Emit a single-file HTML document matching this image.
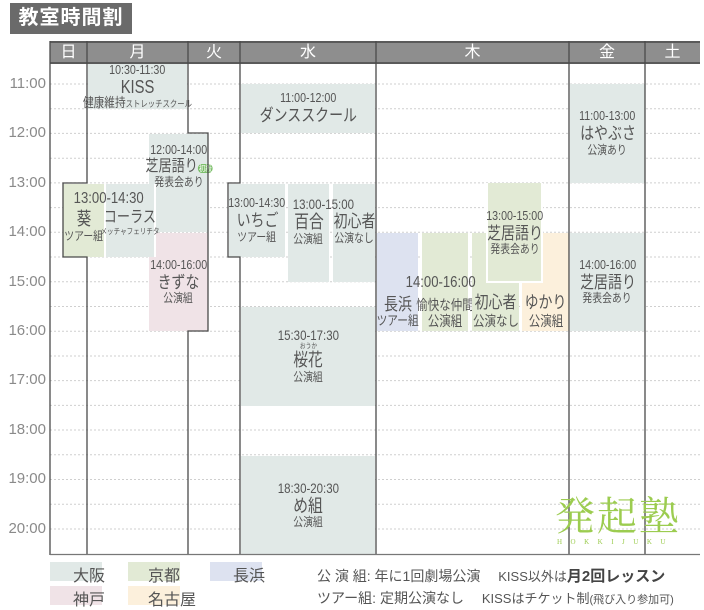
<!DOCTYPE html>
<html><head><meta charset="utf-8"><style>
*{margin:0;padding:0;box-sizing:border-box}
body{width:704px;height:610px;background:#fff;position:relative;overflow:hidden;font-family:"Liberation Sans","Noto Sans CJK JP",sans-serif;color:#555}
.a{position:absolute}
.title{left:10px;top:3px;width:122px;height:31px;background:#6a6a6a;color:#fff;font-weight:bold;font-size:20px;line-height:31px;text-align:center;letter-spacing:1px}
.hd{left:50px;top:41px;width:650px;height:23px;background:#8e8e8e;border-top:2px solid #5a5a5a;border-bottom:2px solid #5a5a5a}
.day{position:absolute;top:41px;height:23px;line-height:23px;color:#fff;font-size:16px;text-align:center}
.tl{position:absolute;left:4px;width:42px;font-size:15px;color:#8a8a8a;text-align:right;line-height:16px}
.b{position:absolute;display:flex;flex-direction:column;align-items:center;justify-content:center;text-align:center;line-height:1.15;color:#555;white-space:nowrap}
.b>span,.sq{display:inline-block;transform:scaleX(.82)}
.os{background:#e1e9e7}.ky{background:#e2ead5}.na{background:#dde2f0}.ko{background:#f0e3e7}.ng{background:#fcf0dc}
.t{font-size:13px}.n{font-size:16px}.s{font-size:12px}
.lg{position:absolute;font-size:16px;color:#555}
.sw{position:absolute;height:19px;width:52px}
</style></head><body>
<div class="a title">教室時間割</div>

<svg class="a" style="left:0;top:0" width="704" height="610">
<g stroke="#cfcfcf" stroke-width="1" stroke-dasharray="2,2">
<line x1="50" x2="700" y1="84" y2="84"/><line x1="50" x2="700" y1="108.7" y2="108.7"/>
<line x1="50" x2="700" y1="133.4" y2="133.4"/><line x1="50" x2="700" y1="158.2" y2="158.2"/>
<line x1="50" x2="700" y1="182.9" y2="182.9"/><line x1="50" x2="700" y1="207.6" y2="207.6"/>
<line x1="50" x2="700" y1="232.3" y2="232.3"/><line x1="50" x2="700" y1="257" y2="257"/>
<line x1="50" x2="700" y1="281.8" y2="281.8"/><line x1="50" x2="700" y1="306.5" y2="306.5"/>
<line x1="50" x2="700" y1="331.2" y2="331.2"/><line x1="50" x2="700" y1="356" y2="356"/>
<line x1="50" x2="700" y1="380.6" y2="380.6"/><line x1="50" x2="700" y1="405.4" y2="405.4"/>
<line x1="50" x2="700" y1="430" y2="430"/><line x1="50" x2="700" y1="454.8" y2="454.8"/>
<line x1="50" x2="700" y1="479.5" y2="479.5"/><line x1="50" x2="700" y1="504.3" y2="504.3"/>
<line x1="50" x2="700" y1="529" y2="529"/>
</g></svg>

<div class="a hd"></div>
<div class="day" style="left:50px;width:37px">日</div>
<div class="day" style="left:87px;width:101px">月</div>
<div class="day" style="left:188px;width:52px">火</div>
<div class="day" style="left:240px;width:136px">水</div>
<div class="day" style="left:376px;width:193px">木</div>
<div class="day" style="left:569px;width:76px">金</div>
<div class="day" style="left:645px;width:55px">土</div>

<div class="tl" style="top:76px">11:00</div>
<div class="tl" style="top:125px">12:00</div>
<div class="tl" style="top:175px">13:00</div>
<div class="tl" style="top:224px">14:00</div>
<div class="tl" style="top:274px">15:00</div>
<div class="tl" style="top:323px">16:00</div>
<div class="tl" style="top:372px">17:00</div>
<div class="tl" style="top:422px">18:00</div>
<div class="tl" style="top:471px">19:00</div>
<div class="tl" style="top:521px">20:00</div>

<!-- Mon / Tue -->
<div class="b os" style="left:88px;top:64px;width:99px;height:45px"><span class="t">10:30-11:30</span><span class="n" style="font-size:18px;line-height:1">KISS</span><span class="s" style="font-size:13px">健康維持<span style="font-size:9px">ストレッチスクール</span></span></div>
<div class="b os" style="left:149px;top:134px;width:59px;height:98px;justify-content:flex-start;padding-top:9px"><span class="t">12:00-14:00</span><span class="n" style="font-size:16px">芝居語り<span style="font-size:8px;background:#7cbf6a;color:#fff;border-radius:6px;padding:0 1px">初級</span></span><span class="s">発表会あり</span></div>
<div class="b ko" style="left:149px;top:233px;width:59px;height:98px"><span class="t">14:00-16:00</span><span class="n" style="font-size:17px">きずな</span><span class="s">公演組</span></div>
<div class="b ky" style="left:63px;top:184px;width:41px;height:73px;justify-content:flex-start;padding-top:25px"><span class="n" style="font-size:18px">葵</span><span class="s">ツアー組</span></div>
<div class="b os" style="left:106px;top:184px;width:50px;height:73px;justify-content:flex-start;padding-top:25px;border-right:2px solid #fff"><span class="n" style="font-size:16px">コーラス</span><span style="font-size:8px">メッチャフェリチタ</span></div>
<div class="a sq" style="left:66px;top:190px;color:#555;font-size:16px">13:00-14:30</div>

<!-- Wed -->
<div class="b os" style="left:241px;top:84px;width:134px;height:49px"><span class="t">11:00-12:00</span><span class="n" style="font-size:17px">ダンススクール</span></div>
<div class="b os" style="left:229px;top:184px;width:56px;height:73px"><span class="t">13:00-14:30</span><span class="n" style="font-size:17px">いちご</span><span class="s">ツアー組</span></div>
<div class="b os" style="left:288px;top:184px;width:41px;height:98px;justify-content:flex-start;padding-top:28px"><span class="n" style="font-size:18px">百合</span><span class="s">公演組</span></div>
<div class="b os" style="left:333px;top:184px;width:42px;height:98px;justify-content:flex-start;padding-top:28px"><span class="n" style="font-size:17px">初心者</span><span class="s">公演なし</span></div>
<div class="a sq" style="left:286px;top:196px;color:#555;font-size:14px">13:00-15:00</div>
<div class="b os" style="left:241px;top:307px;width:134px;height:99px;justify-content:flex-start;padding-top:20px"><span class="t" style="font-size:14px">15:30-17:30</span><span style="font-size:7px;line-height:1">おうか</span><span class="n" style="font-size:18px">桜花</span><span class="s">公演組</span></div>
<div class="b os" style="left:241px;top:456px;width:134px;height:98px"><span class="t" style="font-size:14px">18:30-20:30</span><span class="n" style="font-size:18px">め組</span><span class="s">公演組</span></div>

<!-- Thu -->
<div class="b na" style="left:377px;top:233px;width:41px;height:98px;justify-content:flex-end;padding-bottom:2px"><span class="n" style="font-size:17px">長浜</span><span class="s" style="font-size:13px">ツアー組</span></div>
<div class="b ky" style="left:422px;top:233px;width:46px;height:98px;justify-content:flex-end;padding-bottom:2px"><span style="font-size:14px">愉快な仲間</span><span class="s" style="font-size:14px">公演組</span></div>
<div class="b ky" style="left:472px;top:233px;width:47px;height:98px;justify-content:flex-end;padding-bottom:2px"><span class="n" style="font-size:17px">初心者</span><span class="s" style="font-size:14px">公演なし</span></div>
<div class="b ng" style="left:522px;top:233px;width:47px;height:98px;justify-content:flex-end;padding-bottom:2px"><span class="n" style="font-size:17px">ゆかり</span><span class="s" style="font-size:14px">公演組</span></div>
<div class="b ky" style="left:486px;top:183px;width:57px;height:100px;border:2px solid #fff;border-top:none;justify-content:flex-start;padding-top:26px"><span class="t">13:00-15:00</span><span class="n" style="font-size:17px">芝居語り</span><span class="s">発表会あり</span></div>
<div class="a sq" style="left:398px;top:274px;font-size:16px;color:#555">14:00-16:00</div>

<!-- Fri -->
<div class="b os" style="left:570px;top:84px;width:75px;height:99px"><span class="t">11:00-13:00</span><span class="n" style="font-size:17px">はやぶさ</span><span class="s">公演あり</span></div>
<div class="b os" style="left:570px;top:233px;width:75px;height:98px"><span class="t">14:00-16:00</span><span class="n" style="font-size:17px">芝居語り</span><span class="s">発表会あり</span></div>

<svg class="a" style="left:0;top:0" width="704" height="610">
<g stroke="#4a4a4a" stroke-width="1.3" fill="none">
<line x1="50" y1="41" x2="50" y2="555"/>
<polyline points="87,41 87,183 63,183 63,257 87,257 87,555"/>
<polyline points="188,41 188,133 208,133 208,331 188,331 188,555"/>
<polyline points="240,41 240,183 228,183 228,257 240,257 240,555"/>
<line x1="376" y1="41" x2="376" y2="555"/>
<line x1="569" y1="41" x2="569" y2="555"/>
<line x1="645" y1="41" x2="645" y2="555"/>
<line x1="50" y1="554.5" x2="700" y2="554.5" stroke="#777"/>
</g></svg>

<!-- logo -->
<div class="a" style="left:555px;top:490px;font-family:'Noto Serif CJK SC',serif;font-size:40px;color:#9ccc50;letter-spacing:2px;line-height:48px">発起塾</div>
<div class="a" style="left:557px;top:538px;font-family:'Liberation Serif',serif;font-size:7px;color:#9ccc50;letter-spacing:8.5px">HOKKIJUKU</div>

<!-- legend -->
<div class="sw os" style="left:50px;top:562px"></div><div class="lg" style="left:73px;top:562px">大阪</div>
<div class="sw ky" style="left:128px;top:562px"></div><div class="lg" style="left:148px;top:562px">京都</div>
<div class="sw na" style="left:210px;top:562px"></div><div class="lg" style="left:233px;top:562px">長浜</div>
<div class="sw ko" style="left:50px;top:586px"></div><div class="lg" style="left:73px;top:586px">神戸</div>
<div class="sw ng" style="left:128px;top:586px"></div><div class="lg" style="left:148px;top:586px">名古屋</div>
<div class="lg" style="left:317px;top:565px;font-size:14px">公 演 組: 年に1回劇場公演　 <span style="font-size:13px">KISS以外は</span><b style="font-size:15px;color:#444">月2回レッスン</b></div>
<div class="lg" style="left:317px;top:588px;font-size:14px">ツアー組: 定期公演なし　 <span style="font-size:13px">KISSはチケット制</span><span style="font-size:11px">(飛び入り参加可)</span></div>
</body></html>
